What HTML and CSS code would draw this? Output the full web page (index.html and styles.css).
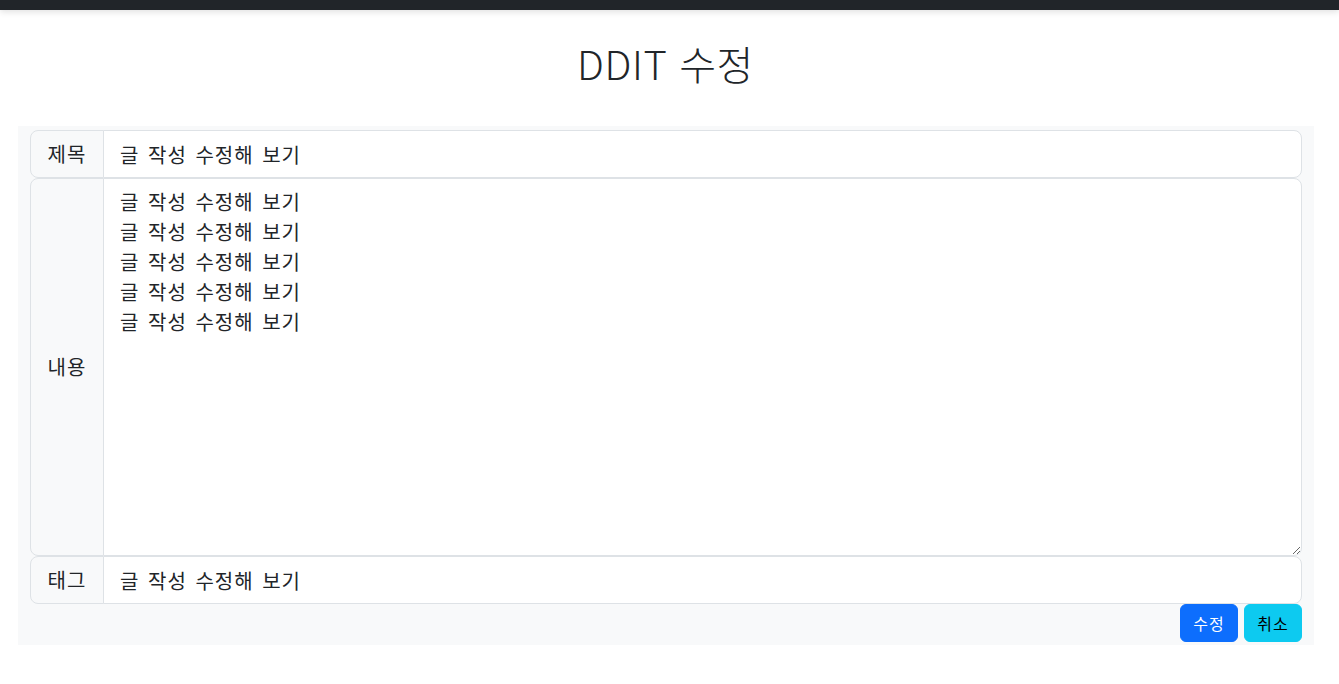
FILE: index.html
```html
<!DOCTYPE html>
<html lang="ko">
<head>
<meta charset="utf-8">
<title>DDIT 수정</title>
<link rel="stylesheet" href="styles.css">
</head>
<body>
<div class="topbar"></div>
<h1 class="title">DDIT 수정</h1>
<form class="panel">
  <div class="group">
    <span class="label">제목</span>
    <input class="field" type="text" value="글 작성 수정해 보기">
  </div>
  <div class="group">
    <span class="label">내용</span>
    <textarea class="field area" rows="12">글 작성 수정해 보기
글 작성 수정해 보기
글 작성 수정해 보기
글 작성 수정해 보기
글 작성 수정해 보기</textarea>
  </div>
  <div class="group">
    <span class="label">태그</span>
    <input class="field" type="text" value="글 작성 수정해 보기">
  </div>
  <div class="actions">
    <button type="button" class="btn btn-primary">수정</button>
    <button type="button" class="btn btn-info">취소</button>
  </div>
</form>
</body>
</html>
```
FILE: styles.css
```css
* { box-sizing: border-box; }
html, body { margin: 0; padding: 0; }
body {
  font-family: "Noto Sans CJK KR", "Noto Sans", "Liberation Sans", sans-serif;
  color: #212529;
  background: #fff;
}
.topbar {
  height: 10px;
  background: #212529;
  box-shadow: 0 2px 6px rgba(0,0,0,0.12);
}
.title {
  margin: 29px 0 0;
  padding: 0 8px 2px 0;
  text-align: center;
  font-size: 40px;
  font-weight: 300;
  line-height: 48px;
  letter-spacing: 0.6px;
  font-family: "Noto Sans CJK KR", "Open Sans", sans-serif;
}
.panel {
  margin: 37px 0 0 18px;
  width: 1296px;
  background: #f8f9fa;
  padding: 4px 12px 3px;
}
.group {
  display: flex;
  align-items: stretch;
}
.label {
  display: flex;
  align-items: center;
  justify-content: center;
  width: 74px;
  padding: 0 12px;
  font-size: 20px;
  line-height: 30px;
  letter-spacing: 1px;
  background: #f8f9fa;
  border: 1px solid #dee2e6;
  border-radius: 8px 0 0 8px;
  white-space: nowrap;
}
.field {
  flex: 1;
  min-width: 0;
  margin-left: -1px;
  font-family: inherit;
  font-size: 20px;
  line-height: 30px;
  letter-spacing: 1px;
  word-spacing: 2px;
  height: 48px;
  padding: 8px 16px;
  color: #212529;
  background: #fff;
  border: 1px solid #dee2e6;
  border-radius: 0 8px 8px 0;
  outline: none;
}
.area {
  height: 378px;
  resize: vertical;
  display: block;
}
.actions {
  display: flex;
  justify-content: flex-end;
  gap: 6px;
}
.btn {
  font-family: inherit;
  font-size: 16px;
  line-height: 24px;
  letter-spacing: 1px;
  width: 58px;
  padding: 6px 0;
  height: 38px;
  border: 1px solid transparent;
  border-radius: 6px;
  cursor: pointer;
}
.btn-primary { background: #0d6efd; border-color: #0d6efd; color: #fff; }
.btn-info { background: #0dcaf0; border-color: #0dcaf0; color: #000; }
```
